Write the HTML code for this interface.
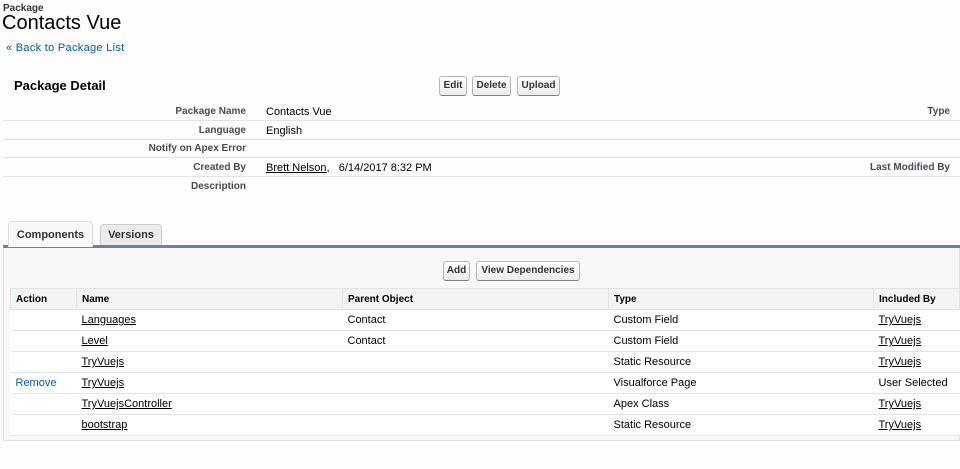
<!DOCTYPE html>
<html><head><style>
*{margin:0;padding:0;box-sizing:border-box}
body{width:960px;height:469px;background:#fdfdfd;font-family:"Liberation Sans",Arial,sans-serif;font-size:11px;color:#000;position:relative;overflow:hidden}
.a{position:absolute;white-space:nowrap}
.lbl{font-weight:bold;color:#4a4a56;text-align:right;font-size:10px}
.btn{position:absolute;border:1px solid #b5b5b5;border-bottom-color:#7f7f7f;border-radius:3px;background:linear-gradient(#fff,#ececec);font-weight:bold;font-size:10px;color:#333;text-align:center;line-height:18px;height:20px}
.line{position:absolute;left:3px;right:0;height:1px;background:#e3e3e7}
a,u{color:#000}
table{position:absolute;left:10px;top:288px;width:950px;border-collapse:collapse;background:#fff;font-size:11px}
td,th{height:21px;border-bottom:1px solid #e3e3e7;padding:0 5px;text-align:left;vertical-align:middle}
th{background:#f2f3f3;font-size:10px;font-weight:bold;border:1px solid #e0e3e5;border-bottom:1px solid #e0e3e5}
td u{text-decoration:underline}
</style></head><body>
<div class="a" style="left:3px;top:3px;font-size:10px;font-weight:bold;color:#333">Package</div>
<div class="a" style="left:2px;top:12px;font-size:20px;color:#000">Contacts Vue</div>
<div class="a" style="left:6px;top:42px;font-size:11px;color:#015ba7;letter-spacing:.3px">« Back to Package List</div>
<div class="a" style="left:14px;top:78px;font-size:13px;font-weight:bold">Package Detail</div>
<div class="btn" style="left:439px;top:76px;width:28px">Edit</div>
<div class="btn" style="left:472px;top:76px;width:39px">Delete</div>
<div class="btn" style="left:517px;top:76px;width:43px">Upload</div>
<div class="a lbl" style="right:714px;top:106px">Package Name</div><div class="a" style="left:266px;top:106px">Contacts Vue</div>
<div class="a lbl" style="right:10px;top:106px">Type</div>
<div class="line" style="top:120px"></div>
<div class="a lbl" style="right:714px;top:125px">Language</div><div class="a" style="left:266px;top:125px">English</div>
<div class="line" style="top:139px"></div>
<div class="a lbl" style="right:714px;top:143px">Notify on Apex Error</div>
<div class="line" style="top:157px"></div>
<div class="a lbl" style="right:714px;top:162px">Created By</div><div class="a" style="left:266px;top:162px"><u>Brett Nelson</u>,&nbsp;&nbsp; 6/14/2017 8:32 PM</div>
<div class="a lbl" style="right:10px;top:162px">Last Modified By</div>
<div class="line" style="top:176px"></div>
<div class="a lbl" style="right:714px;top:181px">Description</div>

<div style="position:absolute;left:8px;top:221px;width:85px;height:26px;background:#f8f8f8;border:1px solid #ddd;border-bottom:none;border-radius:4px 4px 0 0;font-weight:bold;font-size:11px;color:#333;text-align:center;line-height:26px;z-index:2">Components</div>
<div style="position:absolute;left:100px;top:224px;width:62px;height:21px;background:#ececec;border:1px solid #ccc;border-bottom:none;border-radius:4px 4px 0 0;font-weight:bold;font-size:11px;color:#333;text-align:center;line-height:21px">Versions</div>
<div style="position:absolute;left:3px;top:245px;width:957px;height:3px;background:#747e96"></div>
<div style="position:absolute;left:3px;top:248px;width:957px;height:193px;background:#f8f8f8;border:1px solid #e0e0e0;border-top:none"></div>
<div class="btn" style="left:443px;top:261px;width:27px">Add</div>
<div class="btn" style="left:476px;top:261px;width:104px">View Dependencies</div>
<table>
<tr><th style="width:66px">Action</th><th style="width:266px">Name</th><th style="width:266px">Parent Object</th><th style="width:265px">Type</th><th>Included By</th></tr>
<tr><td></td><td><u>Languages</u></td><td>Contact</td><td>Custom Field</td><td><u>TryVuejs</u></td></tr>
<tr><td></td><td><u>Level</u></td><td>Contact</td><td>Custom Field</td><td><u>TryVuejs</u></td></tr>
<tr><td></td><td><u>TryVuejs</u></td><td></td><td>Static Resource</td><td><u>TryVuejs</u></td></tr>
<tr><td style="color:#015ba7">Remove</td><td><u>TryVuejs</u></td><td></td><td>Visualforce Page</td><td>User Selected</td></tr>
<tr><td></td><td><u>TryVuejsController</u></td><td></td><td>Apex Class</td><td><u>TryVuejs</u></td></tr>
<tr><td></td><td><u>bootstrap</u></td><td></td><td>Static Resource</td><td><u>TryVuejs</u></td></tr>
</table>
</body></html>
